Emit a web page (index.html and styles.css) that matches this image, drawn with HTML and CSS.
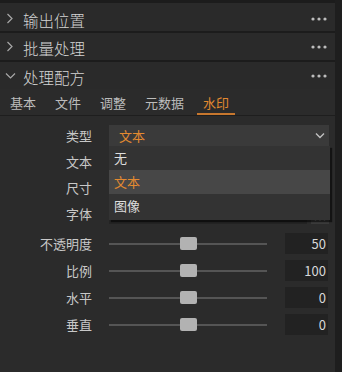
FILE: index.html
```html
<!DOCTYPE html>
<html lang="zh-CN">
<head>
    <meta charset="UTF-8">
    <title>水印设置</title>
    <link rel="stylesheet" href="styles.css">
</head>
<body>
    <div class="panel">
        <div class="main">
            <!-- Collapsed sections -->
            <div class="section-head first">
                <svg class="chev" width="8" height="11" viewBox="0 0 8 11"><path d="M1.5 1 L6 5.5 L1.5 10" /></svg>
                <span class="title">输出位置</span>
                <svg class="more" width="16" height="4" viewBox="0 0 16 4"><circle cx="2" cy="2" r="1.6"/><circle cx="8" cy="2" r="1.6"/><circle cx="14" cy="2" r="1.6"/></svg>
            </div>
            <div class="section-head">
                <svg class="chev" width="8" height="11" viewBox="0 0 8 11"><path d="M1.5 1 L6 5.5 L1.5 10" /></svg>
                <span class="title">批量处理</span>
                <svg class="more" width="16" height="4" viewBox="0 0 16 4"><circle cx="2" cy="2" r="1.6"/><circle cx="8" cy="2" r="1.6"/><circle cx="14" cy="2" r="1.6"/></svg>
            </div>
            <!-- Open section -->
            <div class="section-head">
                <svg class="chev down" width="11" height="8" viewBox="0 0 11 8"><path d="M1 1.5 L5.5 6 L10 1.5" /></svg>
                <span class="title">处理配方</span>
                <svg class="more" width="16" height="4" viewBox="0 0 16 4"><circle cx="2" cy="2" r="1.6"/><circle cx="8" cy="2" r="1.6"/><circle cx="14" cy="2" r="1.6"/></svg>
            </div>

            <div class="tabs">
                <span class="tab">基本</span>
                <span class="tab">文件</span>
                <span class="tab">调整</span>
                <span class="tab">元数据</span>
                <span class="tab active">水印</span>
            </div>

            <div class="form">
                <div class="row">
                    <label>类型</label>
                    <div class="select-wrap">
                        <div class="select">
                            <span>文本</span>
                            <svg width="10" height="7" viewBox="0 0 10 7"><path d="M1 1.5 L5 5.5 L9 1.5" /></svg>
                        </div>
                        <!-- Open dropdown menu -->
                        <ul class="menu">
                            <li>无</li>
                            <li class="selected">文本</li>
                            <li>图像</li>
                        </ul>
                    </div>
                </div>
                <div class="row">
                    <label>文本</label>
                    <div class="field"></div>
                </div>
                <div class="row">
                    <label>尺寸</label>
                    <div class="field"></div>
                </div>
                <div class="row">
                    <label>字体</label>
                    <div class="font-field">
                        <div class="field"></div>
                        <span class="btn">
                            <svg width="12" height="3" viewBox="0 0 12 3"><circle cx="1.5" cy="1.5" r="1"/><circle cx="6" cy="1.5" r="1"/><circle cx="10.5" cy="1.5" r="1"/></svg>
                        </span>
                    </div>
                </div>

                <div class="sliders">
                    <div class="row slider-row">
                        <label>不透明度</label>
                        <div class="slider"><span class="thumb"></span></div>
                        <div class="num">50</div>
                    </div>
                    <div class="row slider-row">
                        <label>比例</label>
                        <div class="slider"><span class="thumb"></span></div>
                        <div class="num">100</div>
                    </div>
                    <div class="row slider-row">
                        <label>水平</label>
                        <div class="slider"><span class="thumb"></span></div>
                        <div class="num">0</div>
                    </div>
                    <div class="row slider-row">
                        <label>垂直</label>
                        <div class="slider"><span class="thumb"></span></div>
                        <div class="num">0</div>
                    </div>
                </div>
            </div>
        </div>
        <div class="scrollbar"></div>
    </div>
</body>
</html>
```

FILE: styles.css
```css
/* Base */
* {
    margin: 0;
    padding: 0;
    box-sizing: border-box;
}

body {
    background: #2b2b2b;
    font-family: "Noto Sans CJK SC", "Noto Sans", sans-serif;
    color: #c8c8c8;
    width: 342px;
    height: 372px;
    overflow: hidden;
}

.panel {
    display: flex;
    height: 372px;
}

.main {
    flex: 1;
}

.scrollbar {
    width: 7px;
    background: #1e1e1e;
}

/* Section headers */
.section-head {
    display: flex;
    align-items: center;
    height: 29px;
    border-top: 2px solid #1c1c1c;
    padding: 0 8px 0 6px;
    background: #2a2a2a;
}

.section-head.first {
    border-top-width: 3px;
    height: 31px;
    padding-top: 3px;
}

.chev {
    fill: none;
    stroke: #a8a8a8;
    stroke-width: 1.2;
    margin-right: 9px;
}

.chev.down {
    margin-left: -1px;
    margin-right: 7px;
}

.title {
    font-size: 15.5px;
    font-weight: 300;
    color: #d4d4d4;
    flex: 1;
    padding-top: 3px;
}

.more {
    fill: #bdbdbd;
}

/* Tabs */
.tabs {
    display: flex;
    gap: 19px;
    height: 27px;
    padding: 4px 0 0 10px;
    border-bottom: 1px solid #1e1e1e;
}

.tab {
    font-size: 13px;
    color: #bcbcbc;
    line-height: 20px;
}

.tab.active {
    color: #e48a30;
    border-bottom: 2px solid #c7772e;
    padding: 0 6px;
    margin-left: -6px;
    margin-right: -6px;
}

/* Form rows */
.form {
    padding-top: 6px;
}

.row {
    display: grid;
    grid-template-columns: 92px 220px;
    column-gap: 17px;
    align-items: center;
    height: 26px;
}

.row label {
    text-align: right;
    font-size: 13px;
    color: #c8c8c8;
}

.field {
    height: 21px;
    background: #232323;
}

.select-wrap {
    position: relative;
}

.select {
    display: flex;
    align-items: center;
    justify-content: space-between;
    height: 21px;
    background: #3a3a3a;
    padding: 0 4px 0 10px;
    color: #e48a30;
    font-size: 13px;
}

.select svg {
    fill: none;
    stroke: #c0c0c0;
    stroke-width: 1.4;
}

/* Dropdown menu */
.menu {
    position: absolute;
    left: 0;
    top: 21px;
    width: 221px;
    list-style: none;
    background: #333;
    padding-bottom: 2px;
    box-shadow: 2px 2px 1px rgba(0, 0, 0, 0.55);
    z-index: 2;
}

.menu li {
    height: 24px;
    line-height: 24px;
    padding-left: 5px;
    font-size: 13px;
    color: #dedede;
}

.menu li.selected {
    background: #474747;
    color: #e48a30;
}

.font-field {
    display: flex;
    gap: 4px;
}

.font-field .field {
    flex: 1;
}

.btn {
    display: flex;
    align-items: flex-end;
    justify-content: center;
    width: 18px;
    height: 21px;
    padding-bottom: 3px;
    background: #3a3a3a;
    fill: #999;
}

/* Sliders */
.sliders {
    margin-top: 4px;
}

.slider-row {
    grid-template-columns: 92px 158px 44px;
    height: 27px;
}

.slider {
    height: 2px;
    background: #555;
    position: relative;
}

.thumb {
    position: absolute;
    left: 71px;
    top: -6px;
    width: 17px;
    height: 13px;
    border-radius: 2px;
    background: #b2b2b2;
}

.num {
    margin-left: 1px;
    height: 21px;
    background: #222;
    text-align: right;
    padding-right: 2px;
    font-size: 13px;
    line-height: 21px;
    color: #d8d8d8;
}
```
